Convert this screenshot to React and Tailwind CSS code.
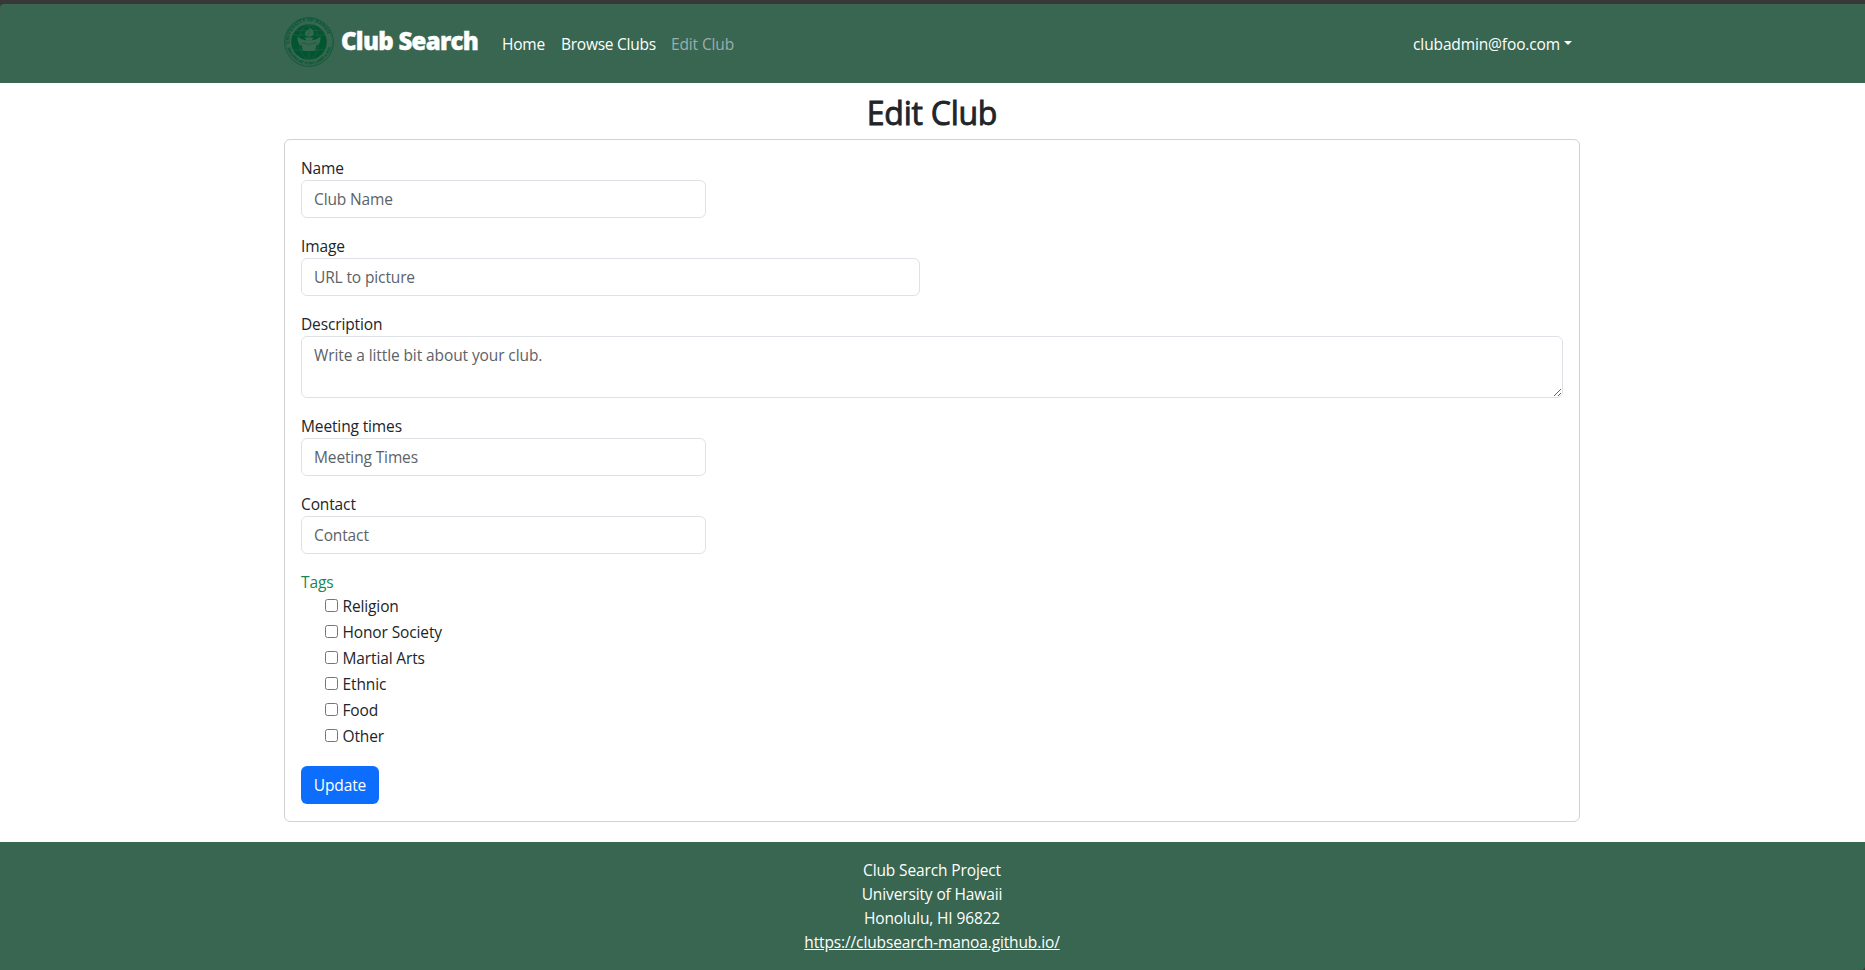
import React from "react";

function Seal() {
  return (
    <svg viewBox="0 0 50 50" className="h-[50px] w-[50px] shrink-0">
      <defs>
        <path id="arcTop" d="M5.2 27 A20 20 0 1 1 44.8 27" />
        <path id="arcBottom" d="M2.8 27 A22.3 22.3 0 0 0 47.2 27" />
      </defs>
      <g fill="none" stroke="#0b5a38">
        <circle cx="25" cy="25" r="24.4" strokeWidth="0.9" />
        <circle cx="25" cy="25" r="23.2" strokeWidth="0.4" opacity="0.6" />
      </g>
      <circle cx="25" cy="25" r="17.8" fill="#025531" />
      <g fill="none" stroke="#2a6547" strokeWidth="0.5">
        <ellipse cx="25" cy="25" rx="9.5" ry="17.5" />
        <path d="M25 7.5V42.5M9 18H41M9 33H41M12 13.5H38" />
      </g>
      <g fill="#376950">
        <path d="M13.5 19.5c2.500 2.600 7 4 11.500 4s9-1.400 11.500-4c.3 3.200-.3 5.800-2.300 8.300l-2.200.6c.3 2.300-.2 4-1.200 5.600H19.200c-1-1.600-1.500-3.300-1.200-5.600l-2.200-.6c-2-2.500-2.600-5.100-2.300-8.300z" />
        <path d="M26 11c3 1.600 4.300 3.600 3.600 6-.5 1.800-2.300 2.800-4.400 2.800s-4-1-4.200-3c-.1-1.800 1-2.700 2.300-3.300 1.300-.6 2.100-1.300 2.700-2.500z" />
        <path d="M20.500 20.200h9l-2 3.600h-5z" />
      </g>
      <path
        d="M17 26c3-.2 5.500.4 8 1.800 2.500-1.400 5-2 8-1.800M20.500 20h9M24.500 18c-.8-2 2-2.400 1.300-4.200"
        fill="none"
        stroke="#0b5a38"
        strokeWidth="0.6"
      />
      <g fill="#075735" className="font-['Liberation_Serif',serif] font-bold">
        <text fontSize="4.6" stroke="#075735" strokeWidth="0.2">
          <textPath href="#arcTop" textLength="58">UNIVERSITY OF HAWAII</textPath>
        </text>
        <text fontSize="3.6" stroke="#075735" strokeWidth="0.2">
          <textPath href="#arcBottom" startOffset="4" textLength="58">MALUNA AE O NA LAHUI A PAU</textPath>
        </text>
      </g>
    </svg>
  );
}

function Field({ label, placeholder, width }) {
  return (
    <label className="mb-4 block">
      <span className="block h-6">{label}</span>
      <input
        type="text"
        placeholder={placeholder}
        className={`block h-[38px] rounded-md border border-[#dee2e6] px-3 placeholder:text-[#5c6268] ${width}`}
      />
    </label>
  );
}

const tags = ["Religion", "Honor Society", "Martial Arts", "Ethnic", "Food", "Other"];

export default function App() {
  return (
    <div className="flex h-[970px] flex-col bg-[#383838] pt-1 font-['Open_Sans','Noto_Sans',sans-serif] text-[15.5px] leading-6 tracking-[-0.13px] text-[#212529]">
      <nav className="h-[79px] shrink-0 rounded-tl-[4px] bg-[#386651] pr-px text-white">
        <div className="mx-auto flex h-full w-[1296px] items-start pt-[13px]">
          <Seal />
          <h1 className="ml-[7px] mt-[6px] w-[161px] whitespace-nowrap text-[24px] font-extrabold leading-[36px] tracking-[-0.72px] [-webkit-text-stroke:0.4px_white]">
            Club Search
          </h1>
          <a className="mt-[15px] w-[59px] whitespace-nowrap tracking-[-0.2px]">Home</a>
          <a className="mt-[15px] w-[110px] whitespace-nowrap tracking-[-0.25px]">Browse Clubs</a>
          <a className="mt-[15px] whitespace-nowrap text-[#9cadb0]">Edit Club</a>
          <a className="ml-auto mr-2 mt-[15px] flex whitespace-nowrap">
            clubadmin@foo.com
            <span className="ml-1 mt-[9px] h-0 w-0 border-x-[4.5px] border-t-[4.5px] border-x-transparent border-t-white" />
          </a>
        </div>
      </nav>
      <main className="flex-1 bg-white pr-px pt-[11px]">
        <h2 className="mb-[7px] text-center text-[32px] font-medium leading-[38px] tracking-[-0.25px] [-webkit-text-stroke:0.9px_#212529]">
          Edit Club
        </h2>
        <form className="mx-auto h-[683px] w-[1296px] rounded-md border border-[#d2d2d3] p-4">
          <Field label="Name" placeholder="Club Name" width="w-[405px]" />
          <Field label="Image" placeholder="URL to picture" width="w-[619px]" />
          <label className="mb-4 block">
            <span className="block h-6">Description</span>
            <textarea
              placeholder="Write a little bit about your club."
              className="block h-[62px] w-full rounded-md border border-[#dee2e6] px-3 py-[6px] tracking-[-0.1px] placeholder:text-[#5c6268]"
            />
          </label>
          <Field label="Meeting times" placeholder="Meeting Times" width="w-[405px]" />
          <Field label="Contact" placeholder="Contact" width="w-[405px]" />
          <div className="h-6 text-[#198754]">Tags</div>
          <div className="mb-4 pl-6">
            {tags.map((tag) => (
              <label key={tag} className="flex h-[26px] items-start">
                <input type="checkbox" className="mr-[4.5px] mt-[5px] h-[13px] w-[13px]" />
                {tag}
              </label>
            ))}
          </div>
          <button type="button" className="h-[38px] w-[78px] rounded-md bg-[#0d6efd] text-white">
            Update
          </button>
        </form>
      </main>
      <footer className="h-32 shrink-0 rounded-br-[4px] bg-[#386651] pr-px pt-4 text-center text-white">
        <div>Club Search Project</div>
        <div>University of Hawaii</div>
        <div>Honolulu, HI 96822</div>
        <a className="underline">https://clubsearch-manoa.github.io/</a>
      </footer>
    </div>
  );
}
